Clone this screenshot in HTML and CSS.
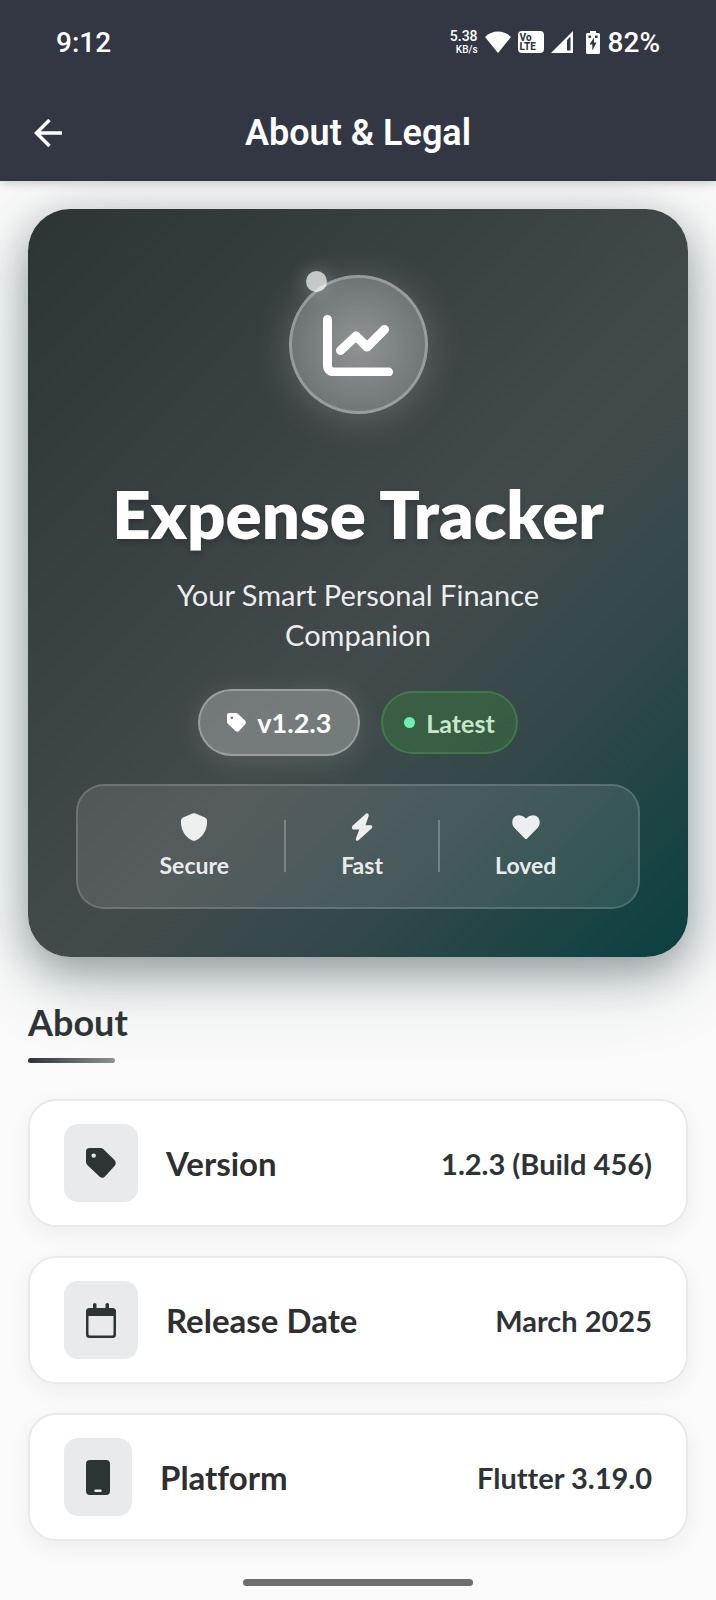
FILE: index.html
```html
<!DOCTYPE html>
<html lang="en">
<head>
<meta charset="utf-8">
<meta name="viewport" content="width=device-width, initial-scale=1">
<title>About &amp; Legal</title>
<link rel="stylesheet" href="styles.css">
</head>
<body>
<svg class="sprite" aria-hidden="true">
  <symbol id="tag" viewBox="0 0 30 30">
    <path fill-rule="evenodd" d="M3.500 0H14.500Q16 0 17.200 1L28.500 12Q31 15 28.500 18L19 28.500Q16.500 31 13.500 28.500L1.300 17Q0 15.700 0 14V3.500Q0 0 3.500 0ZM7.700 5.400a2.200 2.200 0 1 0 0 4.400 2.200 2.200 0 1 0 0-4.400Z"/>
  </symbol>
</svg>
<header class="top">
  <div class="status">
    <span class="clock">9:12</span>
    <div class="indicators">
      <span class="speed"><span class="rate">5.38</span><span class="unit">KB/s</span></span>
      <svg class="wifi" width="26" height="22" viewBox="0 0 26 22" aria-hidden="true"><path d="M0 6Q5.500 0.500 13 0.500T26 6L13 22Z"/></svg>
      <span class="volte"><span>Vo</span><span>LTE</span></span>
      <svg class="signal" width="22" height="22" viewBox="0 0 22 22" aria-hidden="true"><path fill-rule="evenodd" d="M22 0V22H0ZM16 9V19.500H19.500V5.500Z"/></svg>
      <span class="power">
        <svg width="14" height="23" viewBox="0 0 14 23" aria-hidden="true"><path fill-rule="evenodd" d="M4 0H10V2H12.500Q14 2 14 3.500V21.500Q14 23 12.500 23H1.500Q0 23 0 21.500V3.500Q0 2 1.500 2H4ZM2.500 4.500V7H5V4.500ZM9 4.500V7H11.500V4.500ZM8 6.500L3.500 13.500H6.300V19.500L10.500 11.500H8Z"/></svg>
        <span>82%</span>
      </span>
    </div>
  </div>
  <div class="bar">
    <button class="back" type="button" aria-label="Back">
      <svg width="28" height="28" viewBox="0 0 28 28" aria-hidden="true"><path d="M28 14H2.500M15.500 1L2.500 14L15.500 27"/></svg>
    </button>
    <h1 class="heading">About &amp; Legal</h1>
  </div>
</header>
<main class="content">
  <section class="hero">
    <div class="logo">
      <svg width="70" height="62" viewBox="0 0 70 62" aria-hidden="true"><path d="M4.500 5.500V51Q4.500 58 12 58H65.500M17.500 36.500L33 22L44 33L61.500 15.500"/></svg>
      <span class="spark"></span>
    </div>
    <h2 class="name">Expense Tracker</h2>
    <p class="tagline">Your Smart Personal Finance Companion</p>
    <div class="badges">
      <span class="badge version"><svg width="19" height="19" aria-hidden="true"><use href="#tag"/></svg>v1.2.3</span>
      <span class="badge latest"><span class="dot"></span>Latest</span>
    </div>
    <ul class="traits">
      <li class="trait">
        <svg width="28" height="28" viewBox="0 0 28 28" aria-hidden="true"><path d="M12.500 0.600Q14 0 15.500 0.600L25 4.500Q27 5.300 27 7.500C27.500 15 24 23.500 15.700 27.400Q14 28.200 12.300 27.400C4 23.500 0.500 15 1 7.500Q1 5.300 3 4.500Z"/></svg>
        Secure
      </li>
      <li class="rule" aria-hidden="true"></li>
      <li class="trait">
        <svg width="28" height="28" viewBox="0 0 28 28" aria-hidden="true"><path d="M18.500 0.300Q21.500 0.500 20.500 3.500L17.500 12.300H23Q25.500 13.200 23.500 15.500L10.500 27.200Q7.200 28.800 8 25.300L11.300 16.500H5Q2.800 15.300 4.800 12.500Z"/></svg>
        Fast
      </li>
      <li class="rule" aria-hidden="true"></li>
      <li class="trait">
        <svg width="28" height="28" viewBox="0 0 28 28" aria-hidden="true"><path d="M12.800 25.600L2.300 14.800C-2 9 1 2.500 7 2.300Q11 2.300 14 5.500Q17 2.300 21 2.300C27 2.500 30 9 25.700 14.800L15.200 25.600Q14 26.600 12.800 25.600Z"/></svg>
        Loved
      </li>
    </ul>
  </section>
  <section class="about">
    <h2 class="section-title">About</h2>
    <dl class="facts">
      <div class="fact">
        <dt><span class="tile"><svg width="30" height="30" aria-hidden="true"><use href="#tag"/></svg></span>Version</dt>
        <dd>1.2.3 (Build 456)</dd>
      </div>
      <div class="fact">
        <dt><span class="tile"><svg width="30" height="35" viewBox="0 0 30 35" aria-hidden="true"><path fill-rule="evenodd" d="M7 1.500Q7 0 8.800 0T10.500 1.500V5H19.500V1.500Q19.500 0 21.300 0T23 1.500V5H26.500Q30 5 30 8.500V31.500Q30 35 26.500 35H3.500Q0 35 0 31.500V8.500Q0 5 3.500 5H7ZM2.500 13V31Q2.500 32.500 4 32.500H26Q27.500 32.500 27.500 31V13Z"/></svg></span>Release Date</dt>
        <dd>March 2025</dd>
      </div>
      <div class="fact">
        <dt><span class="tile"><svg width="24" height="35" viewBox="0 0 24 35" aria-hidden="true"><path fill-rule="evenodd" d="M4 0H20Q24 0 24 4V31Q24 35 20 35H4Q0 35 0 31V4Q0 0 4 0ZM9.500 29.500a1.200 1.200 0 0 0 0 2.400h5a1.200 1.200 0 0 0 0-2.400Z"/></svg></span>Platform</dt>
        <dd>Flutter 3.19.0</dd>
      </div>
    </dl>
  </section>
</main>
<footer class="gesture"><span class="pill"></span></footer>
</body>
</html>
```
FILE: styles.css
```css
* { box-sizing: border-box; }
body {
  margin: 0;
  min-height: 100vh;
  display: flex;
  flex-direction: column;
  background: #fafafa;
  color: #2d3436;
  font-family: Lato, "Open Sans", sans-serif;
  font-variant-ligatures: none;
}
h1, h2, p, ul, dl, dd { margin: 0; padding: 0; }
svg { display: block; fill: currentColor; flex: none; }
.sprite { position: absolute; width: 0; height: 0; }

.top {
  position: relative;
  z-index: 1;
  background: #323743;
  color: #fff;
  font-family: Roboto, sans-serif;
  box-shadow: 0 2px 10px rgba(0, 0, 0, 0.2);
}
.status {
  height: 84px;
  padding: 0 56px;
  display: flex;
  align-items: center;
  justify-content: space-between;
  font-size: 28px;
  font-weight: 500;
}
.indicators { display: flex; align-items: center; gap: 7px; }
.speed { display: flex; flex-direction: column; align-items: flex-end; }
.rate { font-size: 14px; line-height: 16px; }
.unit { font-size: 10px; line-height: 12px; }
.volte {
  width: 26px;
  padding: 2px;
  display: flex;
  flex-direction: column;
  border-radius: 4px;
  background: #fff;
  color: #323743;
  font-size: 10px;
  font-weight: 800;
  line-height: 9px;
}
.power { display: flex; align-items: center; gap: 8px; margin-left: 6px; }
.bar {
  height: 97px;
  padding: 0 28px;
  display: grid;
  grid-template-columns: 40px 1fr 40px;
  align-items: center;
}
.back {
  width: 40px;
  height: 40px;
  padding: 6px;
  border: 0;
  background: none;
  color: inherit;
}
.back svg { fill: none; stroke: currentColor; stroke-width: 3.5; }
.heading { font-size: 36px; font-weight: 600; text-align: center; line-height: 44px; }

.content { padding: 28px 28px 0; display: flex; flex-direction: column; gap: 43px; }
.hero {
  padding: 66px 48px 48px;
  display: flex;
  flex-direction: column;
  align-items: center;
  border-radius: 42px;
  background: linear-gradient(135deg, #2d3436 0%, #434a4b 56%, #33484a 74%, #0a4040 100%);
  color: #fff;
  text-align: center;
  box-shadow: 0 14px 42px rgba(45, 52, 54, 0.4), 0 20px 84px rgba(0, 64, 64, 0.2);
}
.logo {
  position: relative;
  width: 139px;
  height: 139px;
  display: grid;
  place-items: center;
  border: 3px solid rgba(255, 255, 255, 0.28);
  border-radius: 50%;
  background: radial-gradient(circle, rgba(255, 255, 255, 0.44), rgba(255, 255, 255, 0.28) 70%);
  box-shadow: 0 4px 40px rgba(255, 255, 255, 0.2);
}
.logo svg { fill: none; stroke: currentColor; stroke-width: 9; stroke-linecap: round; stroke-linejoin: round; }
.spark {
  position: absolute;
  top: -7px;
  left: 14px;
  width: 21px;
  height: 21px;
  border-radius: 50%;
  background: rgba(255, 255, 255, 0.7);
  box-shadow: 0 0 20px rgba(255, 255, 255, 0.3);
}
.name {
  margin-top: 60px;
  font-size: 67px;
  font-weight: 800;
  line-height: 78px;
  text-shadow: 0 3px 6px rgba(0, 0, 0, 0.2);
}
.tagline {
  max-width: 420px;
  margin-top: 23px;
  font-size: 29px;
  line-height: 40px;
  color: rgba(255, 255, 255, 0.92);
}
.badges { margin-top: 34px; display: flex; align-items: center; gap: 21px; }
.badge { display: flex; align-items: center; border: 2px solid; border-radius: 36px; font-weight: 700; }
.version {
  height: 67px;
  padding: 0 27px;
  gap: 11px;
  border-color: rgba(255, 255, 255, 0.28);
  background: rgba(255, 255, 255, 0.27);
  font-size: 27px;
  box-shadow: 0 4px 28px rgba(255, 255, 255, 0.12);
}
.latest {
  height: 63px;
  padding: 0 21px;
  gap: 11px;
  border-color: rgba(76, 175, 80, 0.35);
  background: rgba(56, 120, 60, 0.45);
  color: #c8e6c9;
  font-size: 25px;
}
.dot { width: 11px; height: 11px; border-radius: 50%; background: #69f0ae; }
.traits {
  align-self: stretch;
  margin-top: 28px;
  padding: 27px 54px 28px;
  display: flex;
  align-items: center;
  justify-content: space-around;
  border: 2px solid rgba(255, 255, 255, 0.15);
  border-radius: 28px;
  background: rgba(255, 255, 255, 0.1);
  list-style: none;
}
.trait {
  display: flex;
  flex-direction: column;
  align-items: center;
  gap: 10px;
  font-size: 23px;
  font-weight: 700;
  line-height: 28px;
  color: rgba(255, 255, 255, 0.9);
}
.rule { width: 2px; height: 52px; background: rgba(255, 255, 255, 0.25); }

.section-title { font-size: 36px; font-weight: 700; line-height: 44px; }
.section-title::after {
  content: "";
  display: block;
  width: 87px;
  height: 5px;
  margin-top: 14px;
  border-radius: 3px;
  background: linear-gradient(90deg, #2d3436, #8e9293);
}
.facts { margin-top: 36px; display: flex; flex-direction: column; gap: 29px; }
.fact {
  min-height: 128px;
  padding: 23px 34px;
  display: flex;
  align-items: center;
  justify-content: space-between;
  border: 2px solid #e8e9e9;
  border-radius: 28px;
  background: #fff;
  box-shadow: 0 7px 22px rgba(0, 0, 0, 0.05);
}
.fact dt { display: flex; align-items: center; gap: 28px; font-size: 33px; font-weight: 700; color: #2f2f2f; }
.fact dd { font-size: 29px; font-weight: 700; }
.tile {
  height: 78px;
  padding: 0 22px;
  display: grid;
  place-items: center;
  border-radius: 14px;
  background: #e9eaeb;
  color: #2d3436;
}
.gesture { margin-top: auto; padding: 0 0 14px; display: flex; justify-content: center; }
.pill { width: 230px; height: 7px; border-radius: 4px; background: #6d6d6d; }
```
